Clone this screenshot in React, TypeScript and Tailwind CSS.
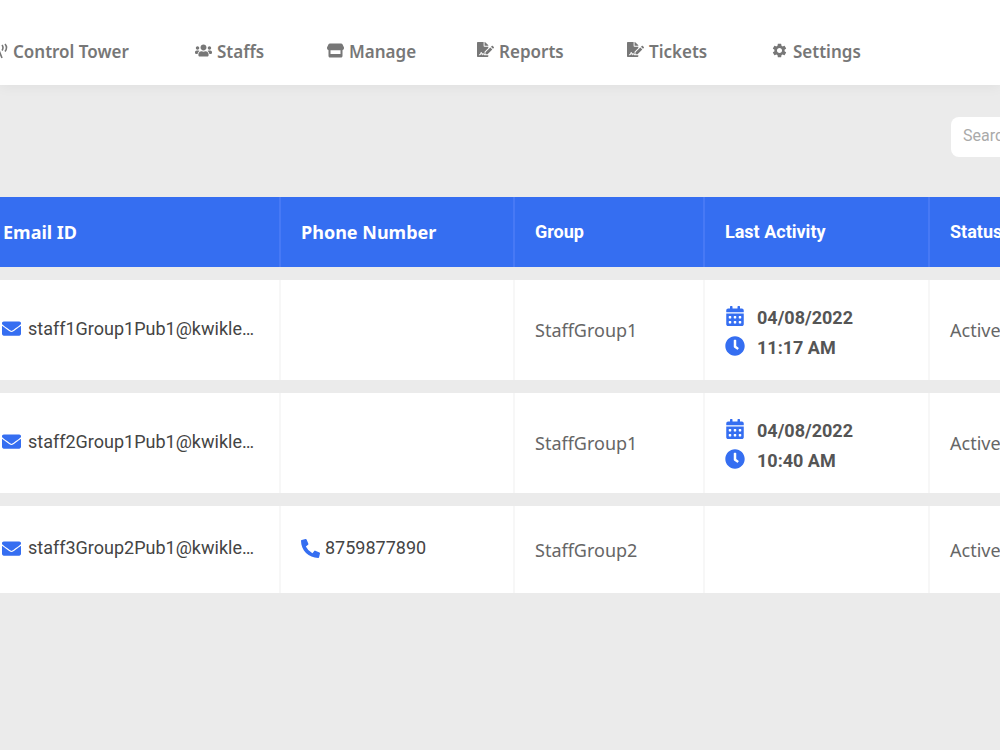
import type { ReactNode } from "react";
import { FaUsers, FaFileSignature, FaEnvelope, FaPhoneAlt, FaCalendarAlt, FaClock } from "react-icons/fa";
import { MdSettings } from "react-icons/md";

type Staff = { email: string; phone?: string; group: string; date?: string; time?: string; status: string };

const staffs: Staff[] = [
  { email: "staff1Group1Pub1@kwiklearn.com", group: "StaffGroup1", date: "04/08/2022", time: "11:17 AM", status: "Active" },
  { email: "staff2Group1Pub1@kwiklearn.com", group: "StaffGroup1", date: "04/08/2022", time: "10:40 AM", status: "Active" },
  { email: "staff3Group2Pub1@kwiklearn.com", phone: "8759877890", group: "StaffGroup2", status: "Active" },
];

function TowerIcon() {
  return (
    <svg viewBox="0 0 20 16" className="h-4 w-5" fill="none" stroke="currentColor" strokeWidth="1.6" aria-hidden="true">
      <path d="M10 5 6 15M10 5l4 10M7.500 11h5M14 2q2 2.500 0 5.500M17 1q3 3.500 0 7.500M6 2q-2 2.500 0 5.500M3 1q-3 3.500 0 7.500" />
    </svg>
  );
}

function StoreIcon() {
  return (
    <svg viewBox="0 0 17 15" className="h-[15px] w-[17px]" fill="currentColor" aria-hidden="true">
      <path d="M3 .5h11c.8 0 1.300.3 1.600 1L17 4.500c.2 1.700-.8 2.800-2.200 2.800H2.200C.8 7.300-.2 6.200 0 4.500l1.400-3C1.700.8 2.200.5 3 .5Z" />
      <path d="M1.500 7h2v4h10V7h2v6c0 .9-.6 1.500-1.500 1.500H3c-.9 0-1.500-.6-1.500-1.500Z" />
    </svg>
  );
}

function NavItem({ icon, label, className }: { icon: ReactNode; label: string; className: string }) {
  return (
    <a href="#" className={`flex shrink-0 items-start gap-[5px] leading-6 whitespace-nowrap ${className}`}>
      <span className="flex h-[22px] items-center">{icon}</span>
      <span>{label}</span>
    </a>
  );
}

const th = "border-r-2 border-[#4779f5] px-5 text-left font-bold";
const td = "border-r-2 border-[#f7f7f7] bg-white px-5";

export default function App() {
  return (
    <div className="min-h-screen overflow-hidden bg-[#ebebeb] font-['Noto_Sans',sans-serif] text-[#666]">
      <header className="flex h-[85px] items-center bg-white pt-[18px] text-[17px] font-semibold text-[#777] shadow-[0_2px_12px_rgba(0,0,0,0.05)]">
        <nav className="-ml-3 flex">
          <NavItem className="w-[207px]" icon={<TowerIcon />} label="Control Tower" />
          <NavItem className="w-[132px]" icon={<FaUsers className="size-[17px]" />} label="Staffs" />
          <NavItem className="w-[150px]" icon={<StoreIcon />} label="Manage" />
          <NavItem className="w-[150px]" icon={<FaFileSignature className="mb-[2px] size-[17px]" />} label="Reports" />
          <NavItem className="w-[144px]" icon={<FaFileSignature className="mb-[2px] size-[17px]" />} label="Tickets" />
          <NavItem className="" icon={<MdSettings className="size-[17px]" />} label="Settings" />
        </nav>
      </header>

      <main>
        <div className="flex h-[99px] justify-end pt-8">
          <input
            type="text"
            aria-label="Search"
            placeholder="Search"
            className="-mr-[200px] h-10 w-[249px] rounded-lg bg-white px-3 pb-1 font-[Roboto,sans-serif] text-base placeholder:text-[#aaa]"
          />
        </div>

        <table className="w-full table-fixed border-separate border-spacing-x-0 border-spacing-y-[13px]">
          <colgroup>
            <col className="w-[281px]" />
            <col className="w-[234px]" />
            <col className="w-[190px]" />
            <col className="w-[225px]" />
            <col />
          </colgroup>
          <thead>
            <tr className="h-[70px] bg-[#356ef1] text-lg text-white">
              <th className="border-r-2 border-[#4779f5] pl-[3px] text-left font-bold">Email ID</th>
              <th className={th}>Phone Number</th>
              <th className={`${th} font-[Roboto,sans-serif]`}>Group</th>
              <th className={`${th} font-[Roboto,sans-serif]`}>Last Activity</th>
              <th className="pl-5 text-left font-[Roboto,sans-serif] font-bold">Status</th>
            </tr>
          </thead>
          <tbody>
            {staffs.map((s) => (
              <tr key={s.email} className={s.date ? "h-[100px]" : "h-[87px]"}>
                <td className="border-r-2 border-[#f7f7f7] bg-white pr-6 pb-[3px] pl-[2px]">
                  <div className="flex items-center gap-[7px] font-[Roboto,sans-serif] text-lg text-[#444]">
                    <FaEnvelope className="size-[19px] shrink-0 text-[#356ef1]" />
                    <span className="truncate">{s.email}</span>
                  </div>
                </td>
                <td className={`${td} pb-[3px]`}>
                  {s.phone && (
                    <div className="flex items-center gap-[5px] font-[Roboto,sans-serif] text-lg text-[#444]">
                      <FaPhoneAlt className="size-[19px] text-[#356ef1]" />
                      <span>{s.phone}</span>
                    </div>
                  )}
                </td>
                <td className={`${td} text-lg`}>{s.group}</td>
                <td className={td}>
                  {s.date && (
                    <div className="flex flex-col pt-[5px] font-[Roboto,sans-serif] text-lg leading-[30px] font-bold text-[#555]">
                      <div className="flex items-center gap-3">
                        <FaCalendarAlt className="mb-1 h-5 w-5 text-[#356ef1]" />
                        <span>{s.date}</span>
                      </div>
                      <div className="flex items-center gap-3">
                        <FaClock className="mb-1 h-5 w-5 text-[#356ef1]" />
                        <span>{s.time}</span>
                      </div>
                    </div>
                  )}
                </td>
                <td className="bg-white pl-5 text-lg">{s.status}</td>
              </tr>
            ))}
          </tbody>
        </table>
      </main>
    </div>
  );
}
